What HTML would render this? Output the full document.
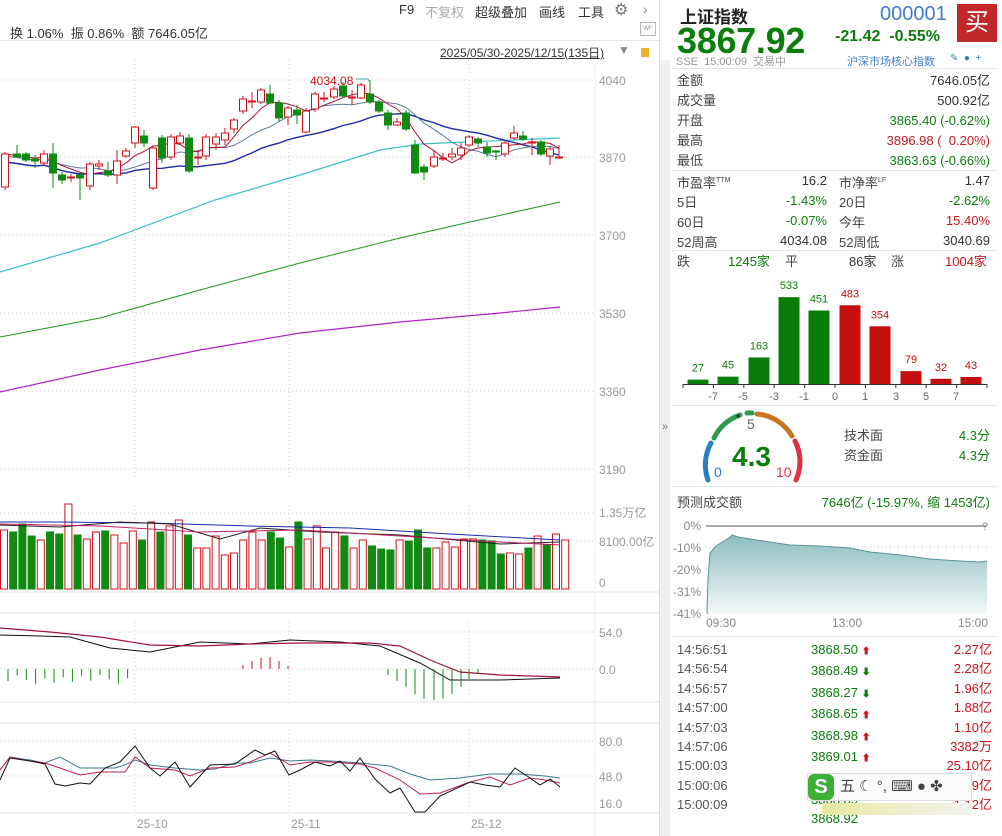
<!DOCTYPE html>
<html><head><meta charset="utf-8"><style>
*{margin:0;padding:0;box-sizing:border-box}
body{width:1002px;height:836px;overflow:hidden;background:#fff;font-family:"Liberation Sans","Noto Sans CJK SC",sans-serif;position:relative;color:#333}
.a{position:absolute;white-space:nowrap}
.g{color:#0b7d0b}.r{color:#c8141e}.gr{color:#888}
.rp{font-size:13px}
.ln{position:absolute;height:1px;background:#e4e4e4}
.ar{font-size:9px}
</style></head><body>
<div class="a" style="left:399px;top:2px;font-size:13px">F9</div>
<div class="a gr" style="left:425px;top:2px;font-size:13px;color:#aaa">不复权</div>
<div class="a" style="left:475px;top:2px;font-size:13px">超级叠加</div>
<div class="a" style="left:539px;top:2px;font-size:13px">画线</div>
<div class="a" style="left:578px;top:2px;font-size:13px">工具</div>
<div class="a" style="left:614px;top:0px;font-size:16px;color:#777">⚙</div>
<div class="a" style="left:643px;top:1px;font-size:14px;color:#888">›</div>
<div class="a" style="left:10px;top:23px;font-size:13px">换 1.06% &nbsp;振 0.86% &nbsp;额 7646.05亿</div>
<div class="a" style="left:640px;top:22px;width:16px;height:14px;border:1px solid #bbb;font-size:6px;color:#999;text-align:center;line-height:12px">WF</div>
<div class="ln" style="left:0;top:40px;width:660px"></div>
<div class="a" style="left:440px;top:44px;font-size:12px;text-decoration:underline">2025/05/30-2025/12/15(135日)</div>
<div class="a" style="left:618px;top:43px;font-size:12px;color:#888">▼</div>
<div class="a" style="left:641px;top:48px;width:8px;height:9px;background:#f0b030"></div>

<svg class="a" style="left:0;top:60px" width="660" height="776" id="ch"></svg>

<div class="a" style="left:659px;top:0;width:1px;height:836px;background:#ddd"></div>
<div class="a" style="left:660px;top:60px;width:10px;height:776px;background:#f0f0f0"></div>
<div class="a" style="left:662px;top:421px;font-size:11px;color:#777">»</div>

<div class="a" style="left:680px;top:3px;font-size:17px;font-weight:bold;color:#222">上证指数</div>
<div class="a g" style="left:677px;top:20px;font-size:36px;font-weight:bold;letter-spacing:-0.3px">3867.92</div>
<div class="a" style="left:880px;top:3px;font-size:20px;color:#3f7ec8">000001</div>
<div class="a" style="left:957px;top:4px;width:40px;height:38px;background:#c0282a;color:#fff;font-size:24px;text-align:center;line-height:38px">买</div>
<div class="a g" style="left:835px;top:28px;font-size:16px;font-weight:bold">-21.42 &nbsp;-0.55%</div>
<div class="a gr" style="left:676px;top:53px;font-size:11px;color:#999">SSE &nbsp;15:00:09 &nbsp;交易中</div>
<div class="a" style="left:847px;top:53px;font-size:11px;color:#3f7ec8">沪深市场核心指数</div>
<div class="a" style="left:950px;top:53px;font-size:10px;color:#2a8a9a">✎ &nbsp;● &nbsp;+</div>
<div class="ln" style="left:672px;top:68px;width:326px"></div>
<div class="a rp" style="left:677px;top:71px;line-height:20px;color:#444">金额<br>成交量<br>开盘<br>最高<br>最低</div>
<div class="a rp" style="right:12px;top:71px;line-height:20px;text-align:right">7646.05亿<br>500.92亿<br><span class="g">3865.40 (-0.62%)</span><br><span class="r">3896.98 ( &nbsp;0.20%)</span><br><span class="g">3863.63 (-0.66%)</span></div>
<div class="ln" style="left:672px;top:170px;width:326px"></div>
<div class="a rp" style="left:677px;top:171px;line-height:20px;color:#444">市盈率<sup style="font-size:7px">TTM</sup><br>5日<br>60日<br>52周高</div>
<div class="a rp" style="right:175px;top:171px;line-height:20px;text-align:right">16.2<br><span class="g">-1.43%</span><br><span class="g">-0.07%</span><br>4034.08</div>
<div class="a rp" style="left:839px;top:171px;line-height:20px;color:#444">市净率<sup style="font-size:7px">LF</sup><br>20日<br>今年<br>52周低</div>
<div class="a rp" style="right:12px;top:171px;line-height:20px;text-align:right">1.47<br><span class="g">-2.62%</span><br><span class="r">15.40%</span><br>3040.69</div>
<div class="ln" style="left:672px;top:250px;width:326px"></div>
<div class="a rp" style="left:677px;top:251px;color:#444">跌</div>
<div class="a rp g" style="left:728px;top:251px">1245家</div>
<div class="a rp" style="left:785px;top:251px;color:#444">平</div>
<div class="a rp" style="left:849px;top:251px">86家</div>
<div class="a rp" style="left:891px;top:251px;color:#444">涨</div>
<div class="a rp r" style="left:945px;top:251px">1004家</div>
<svg class="a" style="left:660px;top:270px" width="342" height="135" id="hist"></svg>
<div class="ln" style="left:672px;top:405px;width:326px"></div>
<svg class="a" style="left:690px;top:405px" width="130" height="80">
<path d="M18 75 A45 45 0 0 1 21 38" stroke="#2a7fc0" stroke-width="5" fill="none" stroke-linecap="round"/>
<path d="M24 33 A45 45 0 0 1 50 10" stroke="#2f9a50" stroke-width="5" fill="none" stroke-linecap="round"/>
<path d="M57 8 A45 45 0 0 1 62 8" stroke="#2f9a50" stroke-width="5" fill="none" stroke-linecap="round"/>
<circle cx="48" cy="11" r="1.5" fill="#222"/>
<path d="M67 9 A45 45 0 0 1 102 31" stroke="#c97420" stroke-width="5" fill="none" stroke-linecap="round"/>
<path d="M105 36 A45 45 0 0 1 106 75" stroke="#e03040" stroke-width="5" fill="none" stroke-linecap="round"/>
</svg>
<div class="a" style="left:747px;top:416px;font-size:14px;color:#666">5</div>
<div class="a" style="left:714px;top:464px;font-size:14px;color:#2a7fc0">0</div>
<div class="a" style="left:776px;top:464px;font-size:14px;color:#e03040">10</div>
<div class="a g" style="left:732px;top:441px;font-size:28px;font-weight:bold">4.3</div>
<div class="a rp" style="left:844px;top:426px;line-height:20px;color:#444">技术面<br>资金面</div>
<div class="a rp g" style="right:12px;top:426px;line-height:20px;text-align:right">4.3分<br>4.3分</div>
<div class="ln" style="left:672px;top:486px;width:326px"></div>
<div class="a rp" style="left:677px;top:492px;color:#444">预测成交额</div>
<div class="a rp g" style="right:12px;top:492px">7646亿 (-15.97%, 缩 1453亿)</div>
<svg class="a" style="left:660px;top:510px" width="342" height="125">
<defs><linearGradient id="gd" x1="0" y1="0" x2="0" y2="1"><stop offset="0" stop-color="#8dbdbf"/><stop offset="1" stop-color="#f4f9f9"/></linearGradient></defs>
<g font-size="12" fill="#888" text-anchor="end" font-family="Liberation Sans">
<text x="41" y="20">0%</text><text x="41" y="42">-10%</text><text x="41" y="64">-20%</text><text x="41" y="86">-31%</text><text x="41" y="108">-41%</text></g>
<g stroke="#bbb" stroke-dasharray="1,3"><line x1="46" y1="37" x2="328" y2="37"/><line x1="46" y1="59" x2="328" y2="59"/><line x1="46" y1="81" x2="328" y2="81"/></g>
<path d="M47 104 L48 68 L50 43 L56 36 L64 31 L70 27 L72 25 L78 27 L90 29 L110 32 L130 35 L160 36 L190 38 L210 42 L240 45 L270 49 L300 51 L320 52 L327 51 L327 104 Z" fill="url(#gd)"/>
<path d="M47 104 L48 68 L50 43 L56 36 L64 31 L70 27 L72 25 L78 27 L90 29 L110 32 L130 35 L160 36 L190 38 L210 42 L240 45 L270 49 L300 51 L320 52 L327 51" fill="none" stroke="#5a9498" stroke-width="1"/>
<line x1="46" y1="16" x2="327" y2="16" stroke="#556" stroke-width="1"/>
<text x="322" y="20" font-size="11" fill="#888">?</text>
<g font-size="12" fill="#888" font-family="Liberation Sans"><text x="46" y="117">09:30</text><text x="172" y="117">13:00</text><text x="298" y="117">15:00</text></g>
</svg>
<div class="ln" style="left:672px;top:636px;width:326px"></div>
<div class="a rp" style="left:677px;top:640px;line-height:19.4px;color:#555">14:56:51<br>14:56:54<br>14:56:57<br>14:57:00<br>14:57:03<br>14:57:06<br>15:00:03<br>15:00:06<br>15:00:09</div>
<div class="a rp g" style="left:811px;top:640px;line-height:19.4px">3868.50 <span class="r ar">⬆</span><br>3868.49 <span class="ar">⬇</span><br>3868.27 <span class="ar">⬇</span><br>3868.65 <span class="r ar">⬆</span><br>3868.98 <span class="r ar">⬆</span><br>3869.01 <span class="r ar">⬆</span><br>3868.88 <span class="ar">⬇</span><br>3868.89<br>3868.92</div>
<div class="a rp r" style="right:10px;top:640px;line-height:19.4px;text-align:right">2.27亿<br>2.28亿<br>1.96亿<br>1.88亿<br>1.10亿<br>3382万<br>25.10亿<br>1.39亿<br>1.12亿</div>
<div class="a" style="left:807px;top:773px;width:165px;height:28px;background:#fbfbfb;border:1px solid #ddd;font-size:15px;color:#444;line-height:26px;padding-left:32px">五 ☾ °, ⌨ ● ✤</div>
<div class="a" style="left:808px;top:774px;width:26px;height:26px;background:#3cb034;border-radius:6px;color:#fff;font-weight:bold;font-size:20px;text-align:center;line-height:26px">S</div>
<div class="a" style="left:822px;top:803px;width:150px;height:12px;background:linear-gradient(90deg,#e8e8a0,#f3f3f3)"></div>

<script>
(function(){
var NS="http://www.w3.org/2000/svg";
function el(p,t,a){var e=document.createElementNS(NS,t);for(var k in a)e.setAttribute(k,a[k]);p.appendChild(e);return e;}
var S=document.getElementById('ch');var O=-60;
function Y(y){return y+O;}
var gl={stroke:"#ccc","stroke-dasharray":"1,3"};
[80,157,235,313,391,469,513,541,632,669,741,776].forEach(function(y){el(S,'line',Object.assign({x1:0,x2:595,y1:Y(y),y2:Y(y)},gl));});
[[0,480],[506,590],[622,702],[730,813]].forEach(function(r){[135,289,469].forEach(function(x){el(S,'line',Object.assign({x1:x,x2:x,y1:Y(r[0]),y2:Y(r[1])},gl));});});
[592,613,702,723,813].forEach(function(y){el(S,'line',{x1:0,x2:660,y1:Y(y),y2:Y(y),stroke:"#e6e6e6"});});
el(S,'line',{x1:595,x2:595,y1:0,y2:776,stroke:"#eee"});
var labs=[[4040,85],[3870,162],[3700,240],[3530,318],[3360,396],[3190,474],["1.35万亿",517],["8100.00亿",546],["0",587],["54.0",637],["0.0",674],["80.0",746],["48.0",781],["16.0",808]];
labs.forEach(function(l){var t=el(S,'text',{x:599,y:Y(l[1]),"font-size":12,fill:"#999","font-family":"Liberation Sans, Noto Sans CJK SC"});t.textContent=l[0];});
[["25-10",137],["25-11",291],["25-12",471]].forEach(function(l){var t=el(S,'text',{x:l[1],y:Y(828),"font-size":12,fill:"#999","font-family":"Liberation Sans"});t.textContent=l[0];});
var C=[[5,154,187,152,190,1],[17,154,157,145,158,0],[26,154,160,152,162,0],[35,159,161,155,168,0],[44,154,163,150,166,1],[53,154,173,143,188,0],[62,175,180,172,184,0],[71,177,178,174,182,1],[80,175,178,172,200,0],[90,164,186,162,190,1],[99,164,166,160,170,1],[108,171,175,162,177,0],[117,161,175,150,184,1],[126,151,156,148,158,1],[135,127,143,126,148,1],[144,136,143,130,147,0],[153,148,188,146,190,1],[162,138,158,135,163,0],[171,137,157,134,160,1],[180,136,143,132,145,1],[189,138,171,134,173,0],[198,157,158,150,165,1],[206,137,156,134,160,1],[216,137,144,133,150,1],[225,133,140,128,145,1],[234,120,129,118,133,1],[243,99,111,96,114,1],[252,101,102,92,108,1],[261,90,102,88,104,1],[270,94,103,85,104,0],[279,103,118,100,122,0],[288,108,117,106,125,1],[297,110,115,105,124,0],[306,111,132,108,133,1],[315,94,109,92,112,1],[324,98,99,92,102,1],[334,89,97,86,99,1],[343,86,96,82,98,0],[352,97,98,90,105,1],[361,85,98,83,99,1],[370,94,102,80,104,0],[379,102,111,100,113,0],[388,113,125,110,130,0],[397,122,125,118,126,1],[406,113,129,110,131,0],[415,145,173,140,174,0],[424,167,172,164,180,0],[434,157,166,150,168,1],[443,158,159,153,161,1],[452,154,157,148,160,1],[461,148,155,143,160,1],[469,137,145,135,147,1],[478,139,143,137,147,0],[487,147,153,142,157,0],[496,151,152,150,160,0],[505,143,154,140,157,1],[514,133,138,126,140,1],[523,136,139,131,141,0],[532,142,143,138,155,1],[541,142,154,140,156,0],[550,149,156,146,165,1],[559,157,158,145,158,1]];
var closes=C.map(function(c){return c[5]?c[1]:c[2];});
function ma(n){var r=[];for(var i=0;i<closes.length;i++){var s=0,k=0;for(var j=Math.max(0,i-n+1);j<=i;j++){s+=closes[j];k++;}r.push(s/k);}return r;}
function pl(pts,col,w){el(S,'polyline',{points:pts.map(function(p){return p[0]+","+Y(p[1]);}).join(" "),fill:"none",stroke:col,"stroke-width":w||1});}
pl([[0,272],[100,243],[215,200],[300,175],[380,150],[420,144],[560,138]],"#3cc0c8",1.2);
pl([[0,337],[100,318],[200,290],[300,263],[400,238],[470,222],[560,202]],"#1a9a1a",1);
pl([[0,392],[100,370],[200,350],[300,333],[400,322],[500,313],[560,307]],"#b020c8",1.2);
var m5=ma(5),m10=ma(10),m20=ma(20);
pl(C.map(function(c,i){return [c[0],m20[i]+8];}),"#1a2aa8",1.4);
pl(C.map(function(c,i){return [c[0],m10[i]+2];}),"#5a7a9a",1);
pl(C.map(function(c,i){return [c[0],m5[i]];}),"#b01030",1);
C.forEach(function(c){var col=c[5]?"#d0101a":"#108a10";
el(S,'line',{x1:c[0],x2:c[0],y1:Y(c[3]),y2:Y(c[4]),stroke:col});
var h=Math.max(1,c[2]-c[1]);
el(S,'rect',{x:c[0]-3.5,y:Y(c[1]),width:7,height:h,fill:c[5]?"#fff":col,stroke:col});});
var t=el(S,'text',{x:310,y:Y(85),"font-size":12,fill:"#d0101a","font-family":"Liberation Sans"});t.textContent="4034.08";
el(S,'polyline',{points:"356,"+Y(79)+" 368,"+Y(79)+" 370,"+Y(83),fill:"none",stroke:"#4aa","stroke-width":1});
var vt=[530,532,524,536,540,532,534,504,535,539,532,531,535,543,531,540,522,532,526,520,535,548,548,536,555,553,540,532,540,532,538,547,522,539,526,548,532,536,548,540,546,549,550,540,541,530,548,548,542,547,539,539,540,541,554,553,554,548,536,545,534];
for(var i=0;i<C.length;i++){var c=C[i];var vx=4+i*9.2;var vtop=vt[i]||540;var col=c[5]?"#d0101a":"#108a10";
el(S,'rect',{x:vx-3.5,y:Y(vtop),width:7,height:589-vtop,fill:c[5]?"#fff":col,stroke:col});}
pl([[0,522],[60,522],[150,523],[250,526],[350,528],[450,534],[560,540]],"#1a2aa8",1);
pl([[0,525],[60,527],[120,522],[170,524],[220,539],[260,528],[320,532],[400,535],[500,544],[560,542]],"#222",1);
pl([[0,524],[100,526],[200,532],[300,530],[400,536],[500,542],[560,545]],"#c02060",1);
pl([[0,635],[40,636],[70,637],[110,648],[150,652],[200,642],[250,644],[290,640],[340,642],[380,646],[420,663],[450,680],[500,680],[560,678]],"#111",1);
pl([[0,628],[50,632],[100,637],[150,645],[200,646],[250,644],[300,643],[370,643],[400,646],[430,660],[460,672],[500,675],[560,677]],"#a01040",1.2);
for(var hx=8;hx<128;hx+=9.2){el(S,'line',{x1:hx,x2:hx,y1:Y(669),y2:Y(669+6+((hx*7)%10)),stroke:"#108a10"});}
[[243,4],[252,8],[261,11],[270,12],[279,8],[288,3]].forEach(function(b){el(S,'line',{x1:b[0],x2:b[0],y1:Y(669-b[1]),y2:Y(669),stroke:"#d0101a"});});
[[388,6],[397,12],[406,18],[415,25],[424,30],[434,31],[443,30],[452,25],[461,18],[469,10],[478,5]].forEach(function(b){el(S,'line',{x1:b[0],x2:b[0],y1:Y(669),y2:Y(669+b[1]),stroke:"#108a10"});});
pl([[0,770],[10,757],[30,760],[45,763],[60,757],[80,768],[100,768],[115,768],[125,765],[135,760],[150,765],[175,768],[200,770],[215,769],[235,763],[250,763],[270,758],[290,761],[310,760],[330,761],[360,763],[390,766],[410,774],[430,780],[460,778],[490,774],[520,774],[545,776],[560,778]],"#3a7a8a",1);
pl([[0,770],[10,757],[30,761],[45,763],[60,768],[80,775],[100,772],[115,772],[125,772],[135,757],[150,768],[175,770],[190,776],[210,768],[235,767],[250,762],[270,753],[290,765],[310,762],[330,762],[360,764],[375,768],[400,780],[420,794],[440,793],[470,782],[490,777],[510,785],[530,778],[545,780],[560,783]],"#c02050",1);
pl([[0,780],[10,758],[30,761],[45,764],[55,784],[65,786],[80,783],[90,784],[105,768],[120,762],[135,746],[150,768],[160,776],[175,762],[190,787],[210,765],[235,764],[255,750],[265,755],[275,751],[289,775],[300,770],[315,762],[330,766],[340,761],[350,771],[360,758],[375,779],[390,793],[400,788],[415,812],[425,812],[440,796],[470,782],[485,785],[500,787],[515,768],[530,778],[540,785],[550,779],[560,787]],"#111",1);
var H=document.getElementById('hist');
var hv=[[698,27,0],[728,45,0],[759,163,0],[789,533,0],[819,451,0],[850,483,1],[880,354,1],[911,79,1],[941,32,1],[971,43,1]];
hv.forEach(function(h){var x=h[0]-660,ht=h[1]*0.163,base=114;var col=h[2]?"#c50e0e":"#0a7c0a";
el(H,'rect',{x:x-10.5,y:base-ht,width:21,height:ht,fill:col});
var tt=el(H,'text',{x:x,y:base-ht-8,"font-size":11,fill:col,"text-anchor":"middle","font-family":"Liberation Sans"});tt.textContent=h[1];});
el(H,'line',{x1:23,x2:327,y1:114.5,y2:114.5,stroke:"#333"});
for(var k=0;k<11;k++){var kx=23+k*30.4;el(H,'line',{x1:kx,x2:kx,y1:114,y2:118,stroke:"#333"});}
["-7","-5","-3","-1","0","1","3","5","7"].forEach(function(s,i){var xs=[53,83,114,144,175,205,236,266,296][i];var tt=el(H,'text',{x:xs,y:130,"font-size":11,fill:"#666","text-anchor":"middle","font-family":"Liberation Sans"});tt.textContent=s;});
})();
</script>
</body></html>
